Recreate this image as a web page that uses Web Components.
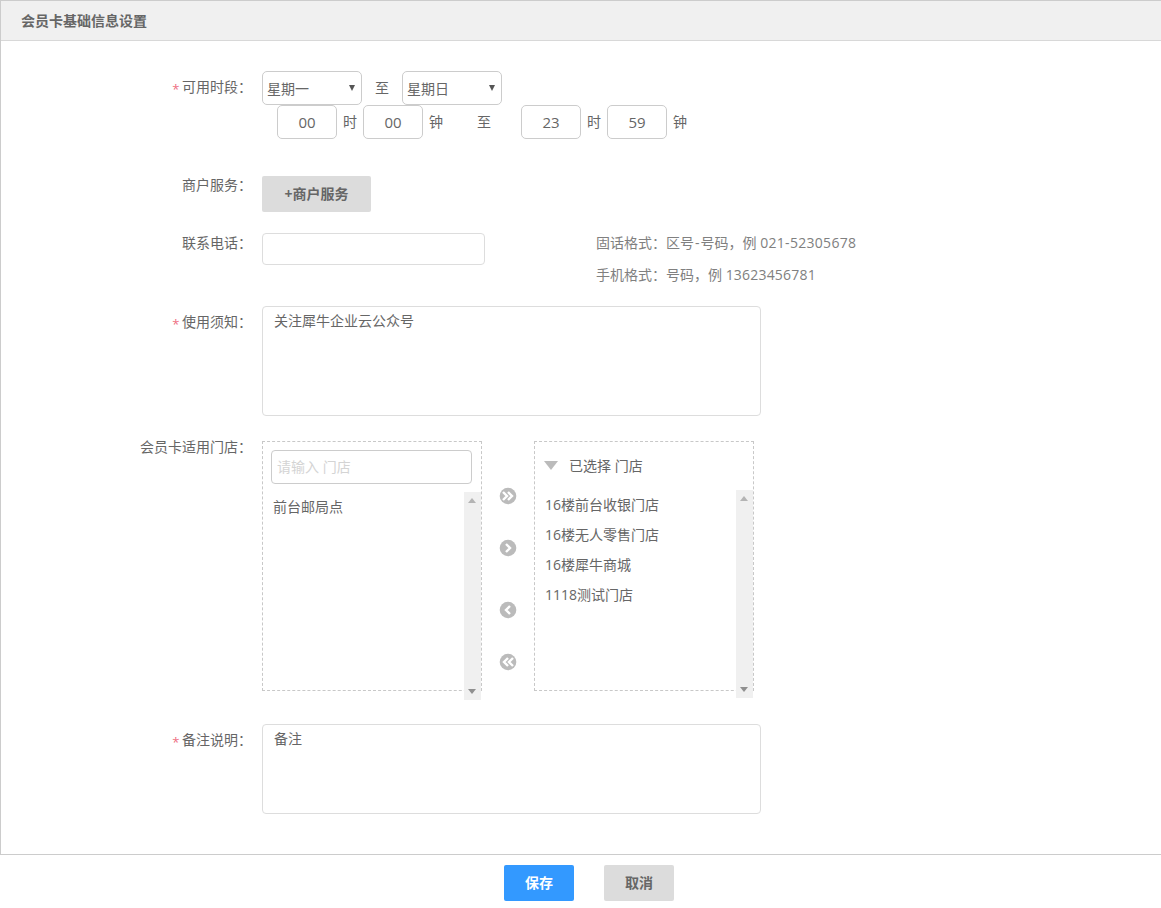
<!DOCTYPE html>
<html lang="zh">
<head>
<meta charset="utf-8">
<title>会员卡基础信息设置</title>
<style>
  html, body { margin: 0; padding: 0; background: #fff; }
  body { font: 14px/20px "Open Sans", "Noto Sans CJK SC", sans-serif; color: #666; }
</style>
</head>
<body>

<card-page>
  <form-row label="可用时段：" required style="--top:30px;--label-top:6px">
    <div style="display:flex;align-items:center">
      <week-select>星期一</week-select>
      <span style="width:40px;text-align:center">至</span>
      <week-select>星期日</week-select>
    </div>
    <div style="display:flex;align-items:center;margin-left:15px">
      <time-box>00</time-box><span style="width:26px;text-align:center">时</span>
      <time-box>00</time-box><span style="width:26px;text-align:center">钟</span>
      <span style="width:70px;margin-right:2px;text-align:center">至</span>
      <time-box>23</time-box><span style="width:26px;text-align:center">时</span>
      <time-box>59</time-box><span style="width:26px;text-align:center">钟</span>
    </div>
  </form-row>

  <form-row label="商户服务：" style="--top:37px;--label-top:-1px">
    <flat-button kind="grey" wide>+商户服务</flat-button>
  </form-row>

  <form-row label="联系电话：" style="--top:21px;--label-top:0px">
    <div style="display:flex">
      <text-box style="--w:223px;--h:32px"></text-box>
      <div style="margin-left:111px;line-height:32px;color:#808080">
        <div style="height:32px;margin-top:-6px">固话格式：区号<span style="margin:0 1px">-</span>号码，例 <span style="letter-spacing:.3px">021-52305678</span></div>
        <div>手机格式：号码，例 <span style="letter-spacing:.2px">13623456781</span></div>
      </div>
    </div>
  </form-row>

  <form-row label="使用须知：" required style="--top:15px;--label-top:6px">
    <text-box style="--w:499px;--h:110px">关注犀牛企业云公众号</text-box>
  </form-row>

  <form-row label="会员卡适用门店：" style="--top:25px;--label-top:-4px">
    <div style="display:flex">
      <store-list placeholder="请输入 门店" bar-top="51">
        <store-item>前台邮局点</store-item>
      </store-list>
      <div style="width:52px;display:flex;flex-direction:column;align-items:center;padding-top:47px;box-sizing:border-box">
        <move-icon dir="right2"></move-icon>
        <move-icon dir="right" style="margin-top:36px"></move-icon>
        <move-icon dir="left" style="margin-top:46px"></move-icon>
        <move-icon dir="left2" style="margin-top:36px"></move-icon>
      </div>
      <store-list heading="已选择 门店" bar-top="49">
        <store-item>16楼前台收银门店</store-item>
        <store-item>16楼无人零售门店</store-item>
        <store-item>16楼犀牛商城</store-item>
        <store-item>1118测试门店</store-item>
      </store-list>
    </div>
  </form-row>

  <form-row label="备注说明：" required style="--top:33px;--label-top:6px">
    <text-box style="--w:499px;--h:90px">备注</text-box>
  </form-row>

  <div slot="footer" style="display:flex;justify-content:center;gap:30px;margin-left:17px">
    <flat-button kind="blue">保存</flat-button>
    <flat-button kind="grey">取消</flat-button>
  </div>
</card-page>

<script>
class CardPage extends HTMLElement {
  constructor() {
    super();
    this.attachShadow({ mode: 'open' });
    this.shadowRoot.innerHTML = `
      <style>
        :host { display: block; height: 908px; overflow: hidden; }
        .panel { height: 855px; box-sizing: border-box; border: 1px solid #ccc; border-right: 0; }
        .head {
          height: 40px;
          box-sizing: border-box;
          background: #f0f0f0;
          border-bottom: 1px solid #d8d8d8;
          padding: 10px 20px;
          font-weight: 700;
          line-height: 20px;
          color: #666;
        }
        .foot { padding-top: 10px; }
      </style>
      <div class="panel">
        <div class="head">会员卡基础信息设置</div>
        <slot></slot>
      </div>
      <div class="foot"><slot name="footer"></slot></div>
    `;
  }
}
customElements.define('card-page', CardPage);

class FormRow extends HTMLElement {
  constructor() {
    super();
    this.attachShadow({ mode: 'open' });
  }

  connectedCallback() {
    const label = this.getAttribute('label') || '';
    const star = this.hasAttribute('required') ? '<i>*</i>' : '';
    this.shadowRoot.innerHTML = `
      <style>
        :host { display: flex; margin-top: var(--top, 20px); }
        .label {
          width: 251px;
          flex: none;
          margin-top: var(--label-top, 0);
          margin-right: -7px;
          text-align: right;
          height: 20px;
          color: #666;
        }
        i {
          color: #ee6f82;
          font-style: normal;
          font-size: 13px;
          margin-right: 2.500px;
          vertical-align: -2px;
        }
        .body { margin-left: 17px; }
      </style>
      <div class="label">${star}${label}</div>
      <div class="body"><slot></slot></div>
    `;
  }
}
customElements.define('form-row', FormRow);

class WeekSelect extends HTMLElement {
  constructor() {
    super();
    this.attachShadow({ mode: 'open' });
    this.shadowRoot.innerHTML = `
      <style>
        :host {
          display: block;
          position: relative;
          width: 100px;
          height: 34px;
          box-sizing: border-box;
          border: 1px solid #ccc;
          border-radius: 5px;
          padding: 7px 4px;
          color: #666;
        }
        .arrow {
          position: absolute;
          right: 6px;
          top: 13px;
          width: 0;
          height: 0;
          border: 3.5px solid transparent;
          border-top: 6px solid #555;
          border-bottom: 0;
        }
      </style>
      <slot></slot>
      <span class="arrow"></span>
    `;
  }
}
customElements.define('week-select', WeekSelect);

class TimeBox extends HTMLElement {
  constructor() {
    super();
    this.attachShadow({ mode: 'open' });
    this.shadowRoot.innerHTML = `
      <style>
        :host {
          display: block;
          width: 60px;
          height: 34px;
          box-sizing: border-box;
          border: 1px solid #ccc;
          border-radius: 5px;
          text-align: center;
          font-size: 15px;
          line-height: 32px;
          color: #666;
        }
      </style>
      <slot></slot>
    `;
  }
}
customElements.define('time-box', TimeBox);

class TextBox extends HTMLElement {
  constructor() {
    super();
    this.attachShadow({ mode: 'open' });
    this.shadowRoot.innerHTML = `
      <style>
        :host {
          display: block;
          width: var(--w);
          height: var(--h);
          box-sizing: border-box;
          border: 1px solid #ddd;
          border-radius: 4px;
          padding: 4px 11px;
          color: #666;
        }
      </style>
      <slot></slot>
    `;
  }
}
customElements.define('text-box', TextBox);

class FlatButton extends HTMLElement {
  constructor() {
    super();
    this.attachShadow({ mode: 'open' });
  }

  connectedCallback() {
    const blue = this.getAttribute('kind') === 'blue';
    const wide = this.hasAttribute('wide');
    this.shadowRoot.innerHTML = `
      <style>
        :host {
          display: block;
          width: ${wide ? 109 : 70}px;
          height: 36px;
          border-radius: 2px;
          background: ${blue ? '#3399ff' : '#dcdcdc'};
          color: ${blue ? '#fff' : '#666'};
          font-weight: 700;
          line-height: 36px;
          text-align: center;
        }
      </style>
      <slot></slot>
    `;
  }
}
customElements.define('flat-button', FlatButton);

class StoreList extends HTMLElement {
  constructor() {
    super();
    this.attachShadow({ mode: 'open' });
  }

  connectedCallback() {
    const placeholder = this.getAttribute('placeholder');
    const heading = this.getAttribute('heading');
    const barTop = this.getAttribute('bar-top') || 50;
    const top = placeholder
      ? `<div class="search">${placeholder}</div>`
      : `<div class="title"><span class="tri"></span>${heading}</div>`;
    this.shadowRoot.innerHTML = `
      <style>
        :host {
          display: block;
          position: relative;
          width: 220px;
          height: 250px;
          box-sizing: border-box;
          border: 1px dashed #c8c8c8;
        }
        .search {
          margin: 8px 8px 0;
          width: 201px;
          height: 34px;
          box-sizing: border-box;
          border: 1px solid #ccc;
          border-radius: 4px;
          padding: 0 5px;
          line-height: 32px;
          color: #d4d4d4;
        }
        .title { height: 47px; margin-bottom: 1px; padding-left: 9px; display: flex; align-items: center; color: #666; }
        .tri {
          width: 0;
          height: 0;
          margin-right: 11px;
          border: 7px solid transparent;
          border-top: 9px solid #bbb;
          border-bottom: 0;
        }
        .items { padding: ${placeholder ? '8px 0 0 10px' : '0 0 0 10px'}; }
        .bar {
          position: absolute;
          top: ${barTop - 1}px;
          right: 0;
          width: 17px;
          height: 208px;
          background: #f0f0f0;
        }
        .bar::before, .bar::after {
          content: "";
          position: absolute;
          left: 4px;
          border: 4px solid transparent;
        }
        .bar::before { top: 6px; border-top: 0; border-bottom: 5px solid #b4b4b4; }
        .bar::after { bottom: 6px; border-bottom: 0; border-top: 5px solid #909090; }
      </style>
      ${top}
      <div class="items"><slot></slot></div>
      <div class="bar"></div>
    `;
  }
}
customElements.define('store-list', StoreList);

class StoreItem extends HTMLElement {
  constructor() {
    super();
    this.attachShadow({ mode: 'open' });
    this.shadowRoot.innerHTML = `
      <style>
        :host { display: block; height: 30px; line-height: 30px; color: #666; }
      </style>
      <slot></slot>
    `;
  }
}
customElements.define('store-item', StoreItem);

const MOVE_PATHS = {
  right: 'M6 4 10 8l-4 4',
  left: 'M10 4 6 8l4 4',
  right2: 'M3 4 7 8l-4 4M8 4l4 4-4 4',
  left2: 'M13 4 9 8l4 4M8 4 4 8l4 4'
};

class MoveIcon extends HTMLElement {
  constructor() {
    super();
    this.attachShadow({ mode: 'open' });
  }

  connectedCallback() {
    const d = MOVE_PATHS[this.getAttribute('dir')];
    this.shadowRoot.innerHTML = `
      <style>
        :host { display: block; width: 16px; height: 16px; }
        svg { display: block; overflow: visible; }
      </style>
      <svg width="16" height="16" viewBox="0 0 16 16">
        <circle cx="8" cy="8" r="8.300" fill="#bbb"/>
        <path d="${d}" fill="none" stroke="#fff" stroke-width="2.400"/>
      </svg>
    `;
  }
}
customElements.define('move-icon', MoveIcon);
</script>
</body>
</html>
